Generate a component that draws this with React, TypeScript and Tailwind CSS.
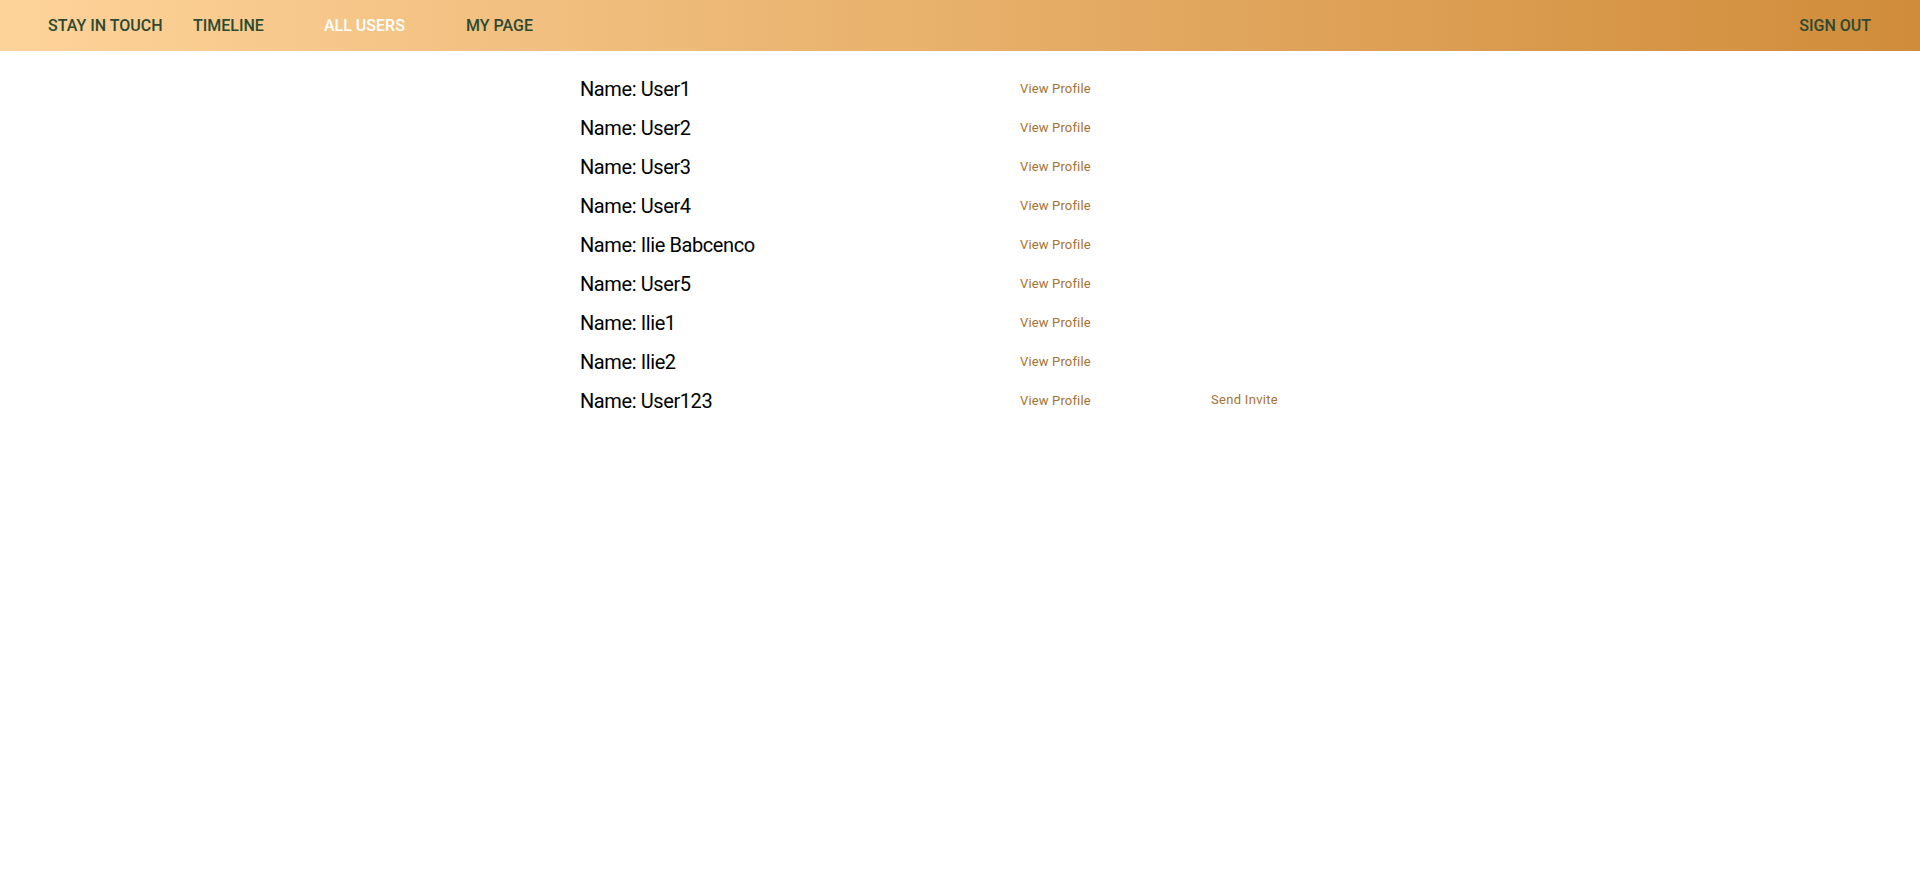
const users = [
  "User1",
  "User2",
  "User3",
  "User4",
  "Ilie Babcenco",
  "User5",
  "Ilie1",
  "Ilie2",
  "User123",
];

export default function App() {
  return (
    <div className="min-h-screen bg-white font-['Roboto',sans-serif]">
      {/* Top bar */}
      <header className="flex h-[51px] items-center bg-[linear-gradient(to_right,#fed39a,#d08c3a)] pl-[48px] pr-[49px] text-[16px] font-medium uppercase leading-none text-[#2c4a33]">
        <span className="w-[145px]">Stay in touch</span>
        <span className="w-[131px]">Timeline</span>
        <span className="w-[142px] text-white">All users</span>
        <span>My page</span>
        <span className="ml-auto">Sign out</span>
      </header>

      {/* User list */}
      <main className="mx-auto w-[760px] pt-[18px]">
        {users.map((name, i) => (
          <div key={name} className="grid h-[39px] grid-cols-[440px_191px_1fr] items-center">
            <span className="text-[20px] tracking-[-0.4px] text-black">Name: {name}</span>
            <span className="mt-[1px] text-[13px] tracking-[0.15px] text-[#a5722f]">View Profile</span>
            {i === users.length - 1 && (
              <span className="-mt-[1px] text-[13px] tracking-[0.3px] text-[#a5722f]">Send Invite</span>
            )}
          </div>
        ))}
      </main>
    </div>
  );
}
